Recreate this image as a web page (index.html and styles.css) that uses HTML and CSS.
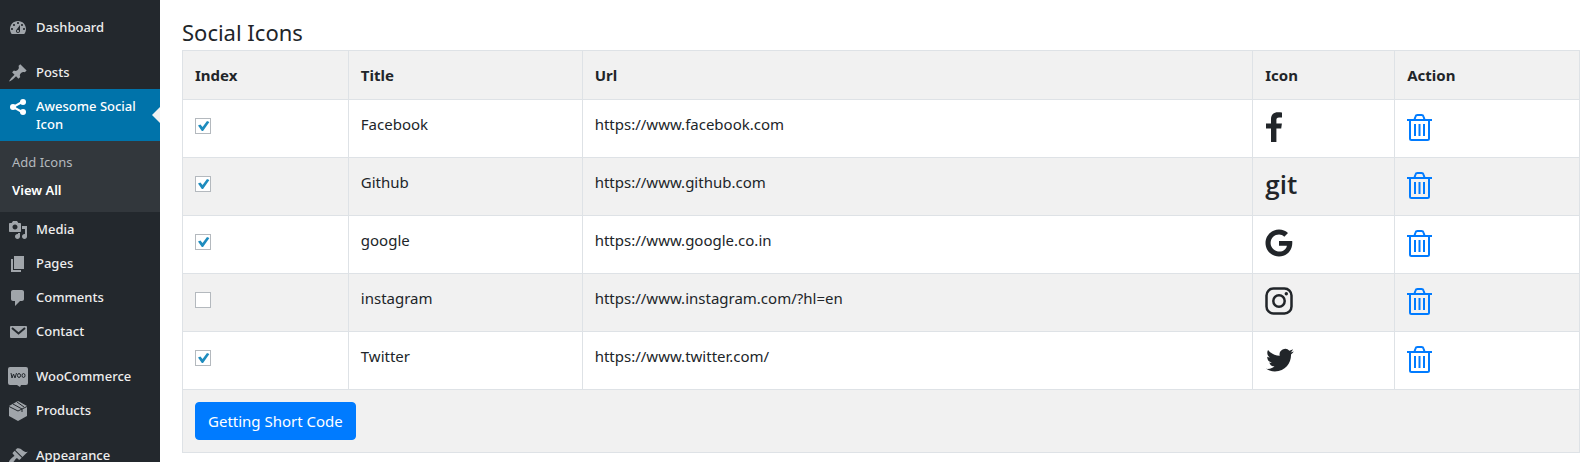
FILE: index.html
```html
<!DOCTYPE html>
<html lang="en">
<head>
<meta charset="utf-8">
<meta name="viewport" content="width=device-width, initial-scale=1">
<title>Social Icons</title>
<link rel="stylesheet" href="styles.css">
</head>
<body>
<svg class="defs" aria-hidden="true">
  <symbol id="trash" viewBox="0 0 26 29">
    <path d="M0 7h25M3 7v18.500q0 1.500 1.500 1.500h16q1.500 0 1.500-1.500V7M7.500 6.500l1-3q.4-1.500 2-1.500h4q1.600 0 2 1.500l1 3M8 11v12M12.500 11v12M17 11v12" fill="none" stroke="currentColor" stroke-width="2"/>
  </symbol>
</svg>
<div class="layout">
  <nav class="sidebar" aria-label="Admin menu">
    <ul class="menu">
      <li><a class="item" href="#"><svg viewBox="0 0 20 20"><path d="M3.760 16h12.480c1.100-1.370 1.760-3.110 1.760-5 0-4.420-3.580-8-8-8s-8 3.580-8 8c0 1.890.66 3.630 1.760 5zM10 4c.55 0 1 .45 1 1s-.45 1-1 1-1-.45-1-1 .45-1 1-1zM6 6c.55 0 1 .45 1 1s-.45 1-1 1-1-.45-1-1 .45-1 1-1zm8 0c.55 0 1 .45 1 1s-.45 1-1 1-1-.45-1-1 .45-1 1-1zm-5.370 5.550L12 7v6c0 1.100-.9 2-2 2s-2-.9-2-2c0-.57.24-1.080.63-1.450zM4 10c.55 0 1 .45 1 1s-.45 1-1 1-1-.45-1-1 .45-1 1-1zm12 0c.55 0 1 .45 1 1s-.45 1-1 1-1-.45-1-1 .45-1 1-1zm-5 3c0-.55-.45-1-1-1s-1 .45-1 1 .45 1 1 1 1-.45 1-1z"/></svg>Dashboard</a></li>
      <li class="group"><a class="item" href="#"><svg viewBox="0 0 20 20"><path d="M10.440 3.020l1.820-1.820 6.360 6.350-1.830 1.820c-1.050-.68-2.480-.57-3.410.36l-.75.75c-.92.93-1.040 2.350-.35 3.410l-1.830 1.820-2.410-2.410-2.800 2.790c-.42.42-3.380 2.710-3.800 2.290s1.860-3.390 2.280-3.810l2.790-2.790L4.100 9.360l1.830-1.820c1.050.69 2.480.57 3.400-.36l.75-.75c.93-.92 1.050-2.350.36-3.410z"/></svg>Posts</a></li>
      <li class="current"><a class="item" href="#" aria-current="true"><svg viewBox="0 0 20 20"><path d="M15 4.500L5 10l10 5.500" fill="none" stroke="currentColor" stroke-width="2"/><circle cx="15" cy="5" r="3"/><circle cx="5" cy="10" r="3"/><circle cx="15" cy="15" r="3"/></svg>Awesome Social Icon</a>
        <ul class="submenu">
          <li><a href="#">Add Icons</a></li>
          <li><a class="selected" href="#">View All</a></li>
        </ul>
      </li>
      <li><a class="item" href="#"><svg viewBox="0 0 20 20"><path d="M13 11V4c0-.55-.45-1-1-1h-1.670L9 1H5L3.670 3H2c-.55 0-1 .45-1 1v7c0 .55.45 1 1 1h10c.55 0 1-.45 1-1zM7 4.500c1.380 0 2.500 1.120 2.500 2.500S8.380 9.500 7 9.500 4.500 8.380 4.500 7 5.620 4.500 7 4.500zM14 6h5v10.500c0 1.380-1.120 2.500-2.500 2.500S14 17.880 14 16.500s1.120-2.500 2.500-2.500c.17 0 .34.02.5.05V9h-3V6zm-4 8.050V13h2v3.500c0 1.380-1.120 2.500-2.500 2.500S7 17.880 7 16.500 8.120 14 9.500 14c.17 0 .34.02.5.05z"/></svg>Media</a></li>
      <li><a class="item" href="#"><svg viewBox="0 0 20 20"><path d="M6 15V2h10v13H6zm-1 1h8v2H3V5h2v11z"/></svg>Pages</a></li>
      <li><a class="item" href="#"><svg viewBox="0 0 20 20"><path d="M5 2h9c1.100 0 2 .9 2 2v7c0 1.100-.9 2-2 2h-2l-5 5v-5H5c-1.100 0-2-.9-2-2V4c0-1.100.9-2 2-2z"/></svg>Comments</a></li>
      <li><a class="item" href="#"><svg viewBox="0 0 20 20"><rect x="2" y="4" width="17" height="12" rx="1"/><path class="cut" d="M4 6l6.500 5.500L17 6"/></svg>Contact</a></li>
      <li class="group"><a class="item" href="#"><svg viewBox="0 0 20 20"><path d="M2 0h16q2 0 2 2v14q0 2-2 2h-5l-1 2-3-2H2q-2 0-2-2V2q0-2 2-2z"/><path class="cut thin" d="M3 6l1 5 1.500-4L7 11l1.500-5"/><ellipse class="cut thin" cx="11" cy="8.500" rx="1.500" ry="2"/><ellipse class="cut thin" cx="15.500" cy="8.500" rx="1.500" ry="2"/></svg>WooCommerce</a></li>
      <li><a class="item" href="#"><svg viewBox="0 0 20 20"><path d="M10 0l9 5v10l-9 5-9-5V5z"/><path class="cut thin" d="M1 5.500l9 4.500 9-4.500M5 3l9 5v3M9 1l7 5"/></svg>Products</a></li>
      <li class="group"><a class="item" href="#"><svg viewBox="0 0 20 20"><path d="M14.480 11.060L7.410 3.990l1.500-1.500c.5-.56 2.300-.47 3.510.32 1.210.8 1.430 1.280 2.910 2.100 1.180.64 2.450 1.260 4.450.85zm-.71.71L6.700 4.700 4.930 6.470c-.39.39-.39 1.020 0 1.410l1.060 1.060c.39.39.39 1.030 0 1.420-.6.6-1.430 1.110-2.210 1.690-.35.26-.7.53-1.010.84C1.430 14.230.4 16.080 1.400 17.070c.99 1 2.840-.03 4.180-1.360.31-.31.58-.66.85-1.020.57-.78 1.080-1.610 1.690-2.210.39-.39 1.020-.39 1.410 0l1.060 1.060c.39.39 1.020.39 1.410 0z"/></svg>Appearance</a></li>
    </ul>
  </nav>
  <main class="content">
    <h1>Social Icons</h1>
    <table>
      <colgroup><col class="c-index"><col class="c-title"><col class="c-url"><col class="c-icon"><col class="c-action"></colgroup>
      <thead><tr><th>Index</th><th>Title</th><th>Url</th><th>Icon</th><th>Action</th></tr></thead>
      <tbody>
        <tr><td><input type="checkbox" aria-label="Facebook" checked></td><td>Facebook</td><td>https://www.facebook.com</td>
          <td><svg class="brand" viewBox="0 0 30 30"><path d="M17 .600v5h-3c-2 0-2.600 1-2.600 2.700v3.200h5.500l-.7 5h-4.800V30H6V16.500H1v-5h5V7.300C6 2.700 8.700.3 12.900.3c1.900 0 3.300.1 4.100.3z"/></svg></td>
          <td><button class="delete" type="button" aria-label="Delete Facebook"><svg><use href="#trash"/></svg></button></td></tr>
        <tr><td><input type="checkbox" aria-label="Github" checked></td><td>Github</td><td>https://www.github.com</td>
          <td><span class="git">git</span></td>
          <td><button class="delete" type="button" aria-label="Delete Github"><svg><use href="#trash"/></svg></button></td></tr>
        <tr><td><input type="checkbox" aria-label="google" checked></td><td>google</td><td>https://www.google.co.in</td>
          <td><svg class="brand" viewBox="0 0 30 30"><path d="M14 13h13.200c.9 8.500-4.400 15.500-13.200 15.500C6.500 28.500 .500 22.500 .500 15S6.500 1.500 14 1.500c3.600 0 6.700 1.300 9 3.500l-3.700 3.700C14.500 4 5.600 7.500 5.600 15c0 9.500 14.500 12 16.300 2.800H14z"/></svg></td>
          <td><button class="delete" type="button" aria-label="Delete google"><svg><use href="#trash"/></svg></button></td></tr>
        <tr><td><input type="checkbox" aria-label="instagram"></td><td>instagram</td><td>https://www.instagram.com/?hl=en</td>
          <td><svg class="brand" viewBox="0 0 30 30"><g fill="none" stroke="currentColor" stroke-width="2.500"><rect x="1.500" y="2.500" width="25" height="25" rx="7"/><circle cx="14" cy="15" r="5.700"/></g><circle cx="21.300" cy="7.800" r="1.700"/></svg></td>
          <td><button class="delete" type="button" aria-label="Delete instagram"><svg><use href="#trash"/></svg></button></td></tr>
        <tr><td><input type="checkbox" aria-label="Twitter" checked></td><td>Twitter</td><td>https://www.twitter.com/</td>
          <td><svg class="brand" viewBox="-1 -2 26 26"><path d="M23.953 4.570a10 10 0 01-2.825.775 4.958 4.958 0 002.163-2.723c-.951.555-2.005.959-3.127 1.184a4.920 4.920 0 00-8.384 4.482C7.690 8.095 4.067 6.130 1.640 3.162a4.822 4.822 0 00-.666 2.475c0 1.710.87 3.213 2.188 4.096a4.904 4.904 0 01-2.228-.616v.06a4.923 4.923 0 003.946 4.827 4.996 4.996 0 01-2.212.085 4.936 4.936 0 004.604 3.417 9.867 9.867 0 01-6.102 2.105c-.39 0-.779-.023-1.170-.067a13.995 13.995 0 007.557 2.209c9.053 0 13.998-7.496 13.998-13.985 0-.21 0-.42-.015-.63A9.935 9.935 0 0024 4.590z"/></svg></td>
          <td><button class="delete" type="button" aria-label="Delete Twitter"><svg><use href="#trash"/></svg></button></td></tr>
      </tbody>
      <tfoot><tr><td colspan="5"><button class="primary" type="button">Getting Short Code</button></td></tr></tfoot>
    </table>
  </main>
</div>
</body>
</html>
```
FILE: styles.css
```css
*, *::before, *::after { box-sizing: border-box; }
body {
  margin: 0;
  background: #fff;
  color: #212529;
  font: 15px/24px "Noto Sans", "Open Sans", sans-serif;
}
.defs { display: none; }
.layout { display: flex; align-items: flex-start; }

.sidebar {
  flex: 0 0 160px;
  height: calc(100vh - 12px);
  overflow: hidden;
  padding-top: 10px;
  background: #23282d;
  font-size: 13px;
  line-height: 18px;
}
.menu, .submenu { margin: 0; padding: 0; list-style: none; }
.sidebar a { color: #eee; text-decoration: none; }
.item { display: flex; gap: 8px; padding: 8px 16px 8px 8px; font-weight: 500; }
.item svg { flex: 0 0 20px; height: 20px; margin-bottom: -2px; fill: #a0a5aa; }
.item .cut { fill: none; stroke: #23282d; stroke-width: 2; }
.item .thin { stroke-width: 1; }
.group { margin-top: 11px; }
.current { background: #32373c; }
.sidebar .current .item { position: relative; background: #0073aa; color: #fff; }
.current .item svg { color: #fff; fill: #fff; }
.current .item::after {
  content: "";
  position: absolute;
  right: 0;
  top: 50%;
  margin-top: -8px;
  border: 8px solid transparent;
  border-left-width: 0;
  border-right-color: #f1f1f1;
}
.submenu { padding: 7px 0 8px; }
.sidebar .submenu a { display: block; padding: 5px 12px; color: #b4b9be; }
.sidebar .submenu .selected { color: #fff; font-weight: 600; }

.content { flex: 1; min-width: 0; padding: 17px 14px 20px 22px; }
h1 { margin: 0 0 3px; font-size: 22px; font-weight: 400; line-height: 30px; }
table { width: 100%; border-collapse: collapse; table-layout: fixed; }
th, td { padding: 12px; border: 1px solid #dee2e6; text-align: left; vertical-align: top; }
thead tr, tbody tr:nth-child(even), tfoot tr { background: #f1f1f1; }
.c-index { width: 11.87%; }
.c-title { width: 16.74%; }
.c-url { width: 48%; }
.c-icon { width: 10.16%; }
.c-action { width: 13.23%; }
input[type="checkbox"] {
  display: block;
  appearance: none;
  width: 16px;
  height: 16px;
  margin: 6px 0 0;
  border: 1px solid #b4b9be;
  background: #fff;
}
input:checked::before {
  content: "";
  display: block;
  width: 12px;
  height: 10px;
  margin: 2px 0 0 2px;
  background: #1e8cbe;
  clip-path: polygon(0 45%, 20% 35%, 38% 60%, 75% 0, 95% 10%, 42% 100%, 32% 100%);
}
.brand { display: block; width: 30px; height: 30px; margin-bottom: 3px; fill: currentColor; }
.git { display: block; height: 33px; font: 600 26px/28px "Open Sans", sans-serif; }
.delete { display: block; padding: 1px 0 0; border: 0; background: none; color: #007bff; }
.delete svg { display: block; width: 26px; height: 29px; }
.primary {
  display: block;
  padding: 6px 12px;
  border: 1px solid #007bff;
  border-radius: 4px;
  background: #007bff;
  color: #fff;
  font: inherit;
}
```
